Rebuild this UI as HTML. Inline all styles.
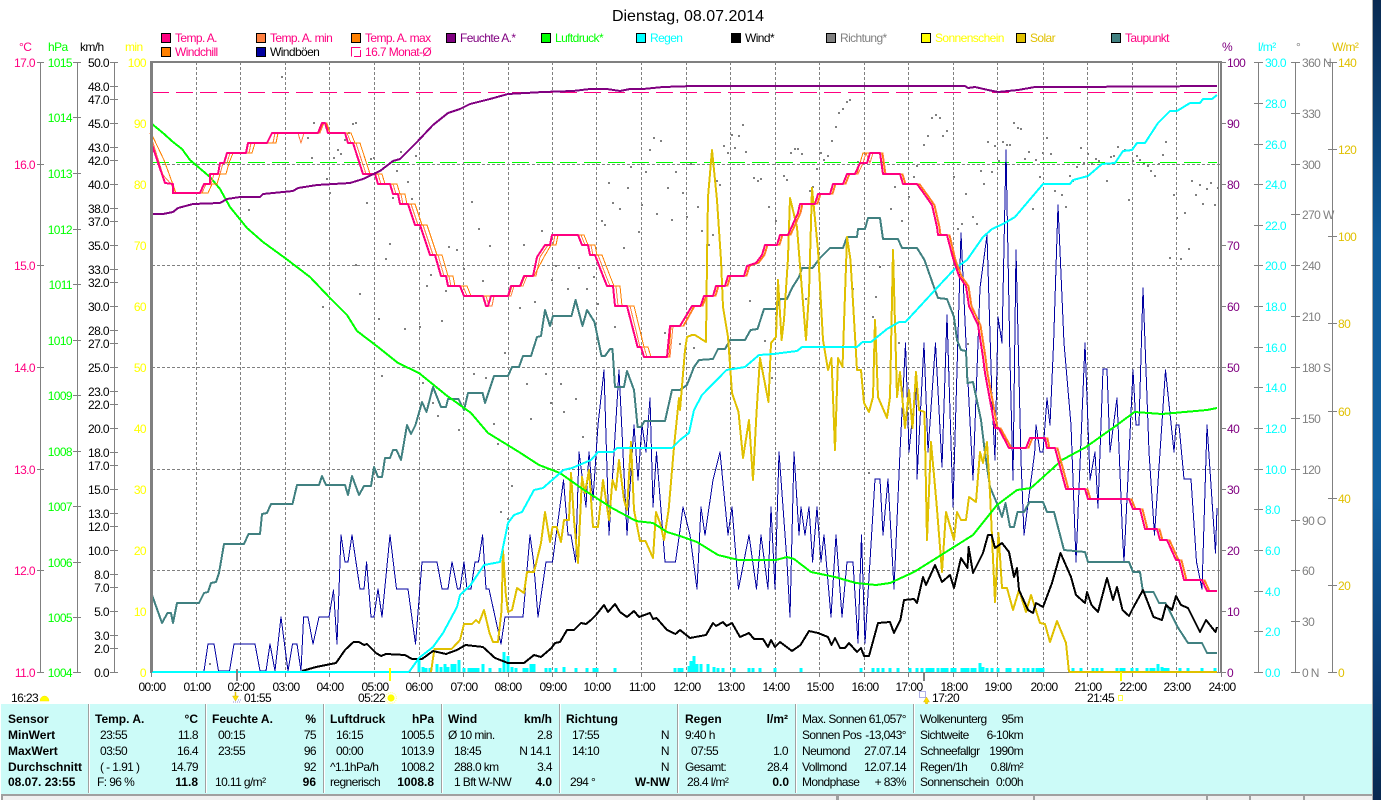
<!DOCTYPE html>
<html><head><meta charset="utf-8"><title>Dienstag, 08.07.2014</title>
<style>
html,body{margin:0;padding:0;background:#fff;width:1381px;height:800px;overflow:hidden}
svg{position:absolute;left:0;top:0;display:block}
text{font-family:"Liberation Sans",sans-serif;font-size:12px;letter-spacing:-.6px;fill:#000}
.e{text-anchor:end}.m{text-anchor:middle}
.b{font-weight:bold;letter-spacing:0}
.p{fill:#ff0080}.g{fill:#00ff00}.y{fill:#ffff00}.v{fill:#800080}.c{fill:#00ffff}.s{fill:#808080}.o{fill:#e0c000}
.l{fill:none;stroke-linejoin:round;shape-rendering:crispEdges}
</style></head><body>
<svg width="1381" height="800" viewBox="0 0 1381 800" xmlns="http://www.w3.org/2000/svg">
<defs><linearGradient id="d" x1="0" y1="0" x2="0" y2="1"><stop offset="0" stop-color="#0a2a52"/><stop offset=".3" stop-color="#0f5a98"/><stop offset=".62" stop-color="#1160a0"/><stop offset=".86" stop-color="#0b3a70"/><stop offset="1" stop-color="#08284f"/></linearGradient></defs>
<rect x="1373" y="0" width="8" height="800" fill="url(#d)"/>
<rect x="1372" y="0" width="1" height="800" fill="#a8a8a8"/>

<text x="688" y="21" class="m" style="font-size:16px;letter-spacing:0">Dienstag, 08.07.2014</text>

<!-- legend -->
<g stroke="#000" stroke-width="1" shape-rendering="crispEdges">
<rect x="161.5" y="33.5" width="9" height="9" fill="#ff0080"/><rect x="256.5" y="33.5" width="9" height="9" fill="#ff8040"/><rect x="351.5" y="33.5" width="9" height="9" fill="#ff8000"/><rect x="446.5" y="33.5" width="9" height="9" fill="#800080"/><rect x="541.5" y="33.5" width="9" height="9" fill="#00ff00"/><rect x="636.5" y="33.5" width="9" height="9" fill="#00ffff"/><rect x="731.5" y="33.5" width="9" height="9" fill="#000"/><rect x="826.5" y="33.5" width="9" height="9" fill="#808080"/><rect x="921.5" y="33.5" width="9" height="9" fill="#ffff00"/><rect x="1016.5" y="33.5" width="9" height="9" fill="#e0c000"/><rect x="1111.5" y="33.5" width="9" height="9" fill="#408080"/>
<rect x="161.5" y="47.5" width="9" height="9" fill="#ff8000"/><rect x="256.5" y="47.5" width="9" height="9" fill="#0000a0"/>
</g>
<path d="M360.5 47.5H351.5V56.5M354 56.5H360.5V50" fill="none" stroke="#ff0080" shape-rendering="crispEdges"/>
<g>
<text x="175" y="42" class="p">Temp. A.</text><text x="270" y="42" class="p">Temp. A. min</text><text x="365" y="42" class="p">Temp. A. max</text><text x="460" y="42" class="v">Feuchte A.*</text><text x="555" y="42" class="g">Luftdruck*</text><text x="650" y="42" class="c">Regen</text><text x="745" y="42">Wind*</text><text x="840" y="42" class="s">Richtung*</text><text x="935" y="42" class="y">Sonnenschein</text><text x="1030" y="42" class="o">Solar</text><text x="1125" y="42" class="p">Taupunkt</text>
<text x="175" y="56" class="p">Windchill</text><text x="270" y="56">Windböen</text><text x="365" y="56" class="p">16.7 Monat-Ø</text>
</g>

<!-- axis headers -->
<text x="19" y="51" class="p">°C</text><text x="48" y="51" class="g">hPa</text><text x="80" y="51">km/h</text><text x="125" y="51" class="y">min</text>
<text x="1222" y="51" class="v">%</text><text x="1258" y="51" class="c">l/m²</text><text x="1296" y="51" class="s">°</text><text x="1332" y="51" class="o">W/m²</text>

<!-- axis lines and ticks -->
<g stroke="#808080" stroke-width="1" shape-rendering="crispEdges" fill="none">
<path d="M40.5 62V672M77.5 62V672M114.5 62V672M1258.5 62V672M1295.5 62V672M1332.5 62V672"/>
<path d="M37 62.5h7M37 164.5h7M37 265.5h7M37 367.5h7M37 469.5h7M37 570.5h7M37 672.5h7"/>
<path d="M73 62.5h8M73 117.5h8M73 173.5h8M73 229.5h8M73 284.5h8M73 340.5h8M73 395.5h8M73 451.5h8M73 506.5h8M73 562.5h8M73 617.5h8M73 672.5h8"/>
<path d="M110 62.5h8M110 86.5h8M110 99.5h8M110 123.5h8M110 147.5h8M110 160.5h8M110 184.5h8M110 208.5h8M110 221.5h8M110 245.5h8M110 269.5h8M110 282.5h8M110 306.5h8M110 330.5h8M110 343.5h8M110 367.5h8M110 391.5h8M110 404.5h8M110 428.5h8M110 452.5h8M110 465.5h8M110 489.5h8M110 513.5h8M110 526.5h8M110 550.5h8M110 574.5h8M110 587.5h8M110 611.5h8M110 635.5h8M110 648.5h8M110 672.5h8"/>
<path d="M1222 62.5h4M1222 123.5h4M1222 184.5h4M1222 245.5h4M1222 306.5h4M1222 367.5h4M1222 428.5h4M1222 489.5h4M1222 550.5h4M1222 611.5h4M1222 672.5h4"/>
<path d="M1254 62.5h9M1254 103.5h9M1254 144.5h9M1254 184.5h9M1254 225.5h9M1254 265.5h9M1254 306.5h9M1254 347.5h9M1254 387.5h9M1254 428.5h9M1254 469.5h9M1254 509.5h9M1254 550.5h9M1254 591.5h9M1254 631.5h9M1254 672.5h9"/>
<path d="M1291 62.5h9M1291 113.5h9M1291 164.5h9M1291 214.5h9M1291 265.5h9M1291 316.5h9M1291 367.5h9M1291 418.5h9M1291 469.5h9M1291 520.5h9M1291 570.5h9M1291 621.5h9M1291 672.5h9"/>
<path d="M1328 62.5h9M1328 149.5h9M1328 236.5h9M1328 323.5h9M1328 411.5h9M1328 498.5h9M1328 585.5h9M1328 672.5h9"/>
</g>

<!-- axis labels -->
<g dominant-baseline="central" transform="translate(0,1)">
<g text-anchor="end"><text x="35" y="62" class="p">17.0</text><text x="35" y="164" class="p">16.0</text><text x="35" y="265" class="p">15.0</text><text x="35" y="367" class="p">14.0</text><text x="35" y="469" class="p">13.0</text><text x="35" y="570" class="p">12.0</text><text x="35" y="672" class="p">11.0</text></g>
<g text-anchor="end"><text x="72" y="62" class="g">1015</text><text x="72" y="117" class="g">1014</text><text x="72" y="173" class="g">1013</text><text x="72" y="229" class="g">1012</text><text x="72" y="284" class="g">1011</text><text x="72" y="340" class="g">1010</text><text x="72" y="395" class="g">1009</text><text x="72" y="451" class="g">1008</text><text x="72" y="506" class="g">1007</text><text x="72" y="562" class="g">1006</text><text x="72" y="617" class="g">1005</text><text x="72" y="672" class="g">1004</text></g>
<g text-anchor="end"><text x="109" y="62">50.0</text><text x="109" y="86">48.0</text><text x="109" y="99">47.0</text><text x="109" y="123">45.0</text><text x="109" y="147">43.0</text><text x="109" y="160">42.0</text><text x="109" y="184">40.0</text><text x="109" y="208">38.0</text><text x="109" y="221">37.0</text><text x="109" y="245">35.0</text><text x="109" y="269">33.0</text><text x="109" y="282">32.0</text><text x="109" y="306">30.0</text><text x="109" y="330">28.0</text><text x="109" y="343">27.0</text><text x="109" y="367">25.0</text><text x="109" y="391">23.0</text><text x="109" y="404">22.0</text><text x="109" y="428">20.0</text><text x="109" y="452">18.0</text><text x="109" y="465">17.0</text><text x="109" y="489">15.0</text><text x="109" y="513">13.0</text><text x="109" y="526">12.0</text><text x="109" y="550">10.0</text><text x="109" y="574">8.0</text><text x="109" y="587">7.0</text><text x="109" y="611">5.0</text><text x="109" y="635">3.0</text><text x="109" y="648">2.0</text><text x="109" y="672">0.0</text></g>
<g text-anchor="end"><text x="146" y="62" class="y">100</text><text x="146" y="123" class="y">90</text><text x="146" y="184" class="y">80</text><text x="146" y="245" class="y">70</text><text x="146" y="306" class="y">60</text><text x="146" y="367" class="y">50</text><text x="146" y="428" class="y">40</text><text x="146" y="489" class="y">30</text><text x="146" y="550" class="y">20</text><text x="146" y="611" class="y">10</text><text x="146" y="672" class="y">0</text></g>
<g><text x="1227" y="62" class="v">100</text><text x="1227" y="123" class="v">90</text><text x="1227" y="184" class="v">80</text><text x="1227" y="245" class="v">70</text><text x="1227" y="306" class="v">60</text><text x="1227" y="367" class="v">50</text><text x="1227" y="428" class="v">40</text><text x="1227" y="489" class="v">30</text><text x="1227" y="550" class="v">20</text><text x="1227" y="611" class="v">10</text><text x="1227" y="672" class="v">0</text></g>
<g><text x="1265" y="62" class="c">30.0</text><text x="1265" y="103" class="c">28.0</text><text x="1265" y="144" class="c">26.0</text><text x="1265" y="184" class="c">24.0</text><text x="1265" y="225" class="c">22.0</text><text x="1265" y="265" class="c">20.0</text><text x="1265" y="306" class="c">18.0</text><text x="1265" y="347" class="c">16.0</text><text x="1265" y="387" class="c">14.0</text><text x="1265" y="428" class="c">12.0</text><text x="1265" y="469" class="c">10.0</text><text x="1265" y="509" class="c">8.0</text><text x="1265" y="550" class="c">6.0</text><text x="1265" y="591" class="c">4.0</text><text x="1265" y="631" class="c">2.0</text><text x="1265" y="672" class="c">0.0</text></g>
<g><text x="1302" y="62" class="s">360 N</text><text x="1302" y="113" class="s">330</text><text x="1302" y="164" class="s">300</text><text x="1302" y="214" class="s">270 W</text><text x="1302" y="265" class="s">240</text><text x="1302" y="316" class="s">210</text><text x="1302" y="367" class="s">180 S</text><text x="1302" y="418" class="s">150</text><text x="1302" y="469" class="s">120</text><text x="1302" y="520" class="s">90 O</text><text x="1302" y="570" class="s">60</text><text x="1302" y="621" class="s">30</text><text x="1302" y="672" class="s">0 N</text></g>
<g><text x="1338" y="62" class="o">140</text><text x="1338" y="149" class="o">120</text><text x="1338" y="236" class="o">100</text><text x="1338" y="323" class="o">80</text><text x="1338" y="411" class="o">60</text><text x="1338" y="498" class="o">40</text><text x="1338" y="585" class="o">20</text><text x="1338" y="672" class="o">0</text></g>
</g>

<!-- grid -->
<g stroke="#808080" stroke-width="1" stroke-dasharray="3 2" shape-rendering="crispEdges" fill="none">
<path d="M196.5 62V672M240.5 62V672M285.5 62V672M329.5 62V672M374.5 62V672M419.5 62V672M463.5 62V672M508.5 62V672M552.5 62V672M596.5 62V672M641.5 62V672M686.5 62V672M730.5 62V672M775.5 62V672M819.5 62V672M864.5 62V672M908.5 62V672M953.5 62V672M997.5 62V672M1043.5 62V672M1087.5 62V672M1132.5 62V672M1176.5 62V672"/>
<path d="M152 164.5H1222M152 265.5H1222M152 367.5H1222M152 469.5H1222M152 570.5H1222"/>
</g>
<g stroke="#808080" stroke-width="1" shape-rendering="crispEdges" fill="none">
<path d="M151.5 672V677M196.5 672V677M240.5 672V677M285.5 672V677M329.5 672V677M374.5 672V677M419.5 672V677M463.5 672V677M508.5 672V677M552.5 672V677M596.5 672V677M641.5 672V677M686.5 672V677M730.5 672V677M775.5 672V677M819.5 672V677M864.5 672V677M908.5 672V677M953.5 672V677M997.5 672V677M1043.5 672V677M1087.5 672V677M1132.5 672V677M1176.5 672V677M1221.5 672V677"/>
</g>

<!-- direction dots -->
<path fill="#808080" shape-rendering="crispEdges" d="M281 76h2v2h-2zM313 122h2v2h-2zM352 123h2v2h-2zM355 122h2v2h-2zM348 132h2v2h-2zM307 137h2v2h-2zM344 139h2v2h-2zM337 149h2v2h-2zM340 153h2v2h-2zM311 157h2v2h-2zM333 157h2v2h-2zM370 158h2v2h-2zM373 157h2v2h-2zM400 151h2v2h-2zM415 155h2v2h-2zM396 170h2v2h-2zM407 181h2v2h-2zM326 178h2v2h-2zM329 192h2v2h-2zM366 202h2v2h-2zM392 197h2v2h-2zM411 198h2v2h-2zM248 209h2v2h-2zM389 243h2v2h-2zM385 258h2v2h-2zM448 246h2v2h-2zM456 249h2v2h-2zM471 201h2v2h-2zM478 228h2v2h-2zM489 245h2v2h-2zM523 244h2v2h-2zM541 230h2v2h-2zM601 220h2v2h-2zM604 224h2v2h-2zM608 182h2v2h-2zM612 202h2v2h-2zM619 208h2v2h-2zM627 187h2v2h-2zM623 247h2v2h-2zM630 166h2v2h-2zM638 231h2v2h-2zM641 204h2v2h-2zM645 171h2v2h-2zM649 149h2v2h-2zM653 137h2v2h-2zM660 140h2v2h-2zM656 213h2v2h-2zM667 187h2v2h-2zM671 219h2v2h-2zM675 171h2v2h-2zM682 192h2v2h-2zM686 216h2v2h-2zM690 163h2v2h-2zM697 206h2v2h-2zM701 230h2v2h-2zM708 244h2v2h-2zM712 234h2v2h-2zM716 180h2v2h-2zM719 184h2v2h-2zM723 145h2v2h-2zM727 152h2v2h-2zM731 134h2v2h-2zM734 147h2v2h-2zM738 135h2v2h-2zM742 124h2v2h-2zM745 151h2v2h-2zM753 177h2v2h-2zM757 180h2v2h-2zM760 178h2v2h-2zM768 206h2v2h-2zM775 220h2v2h-2zM783 175h2v2h-2zM786 179h2v2h-2zM790 152h2v2h-2zM794 148h2v2h-2zM797 148h2v2h-2zM801 153h2v2h-2zM809 190h2v2h-2zM812 186h2v2h-2zM816 168h2v2h-2zM820 152h2v2h-2zM823 159h2v2h-2zM827 155h2v2h-2zM831 140h2v2h-2zM835 126h2v2h-2zM838 112h2v2h-2zM842 108h2v2h-2zM846 101h2v2h-2zM849 99h2v2h-2zM857 161h2v2h-2zM890 208h2v2h-2zM894 186h2v2h-2zM901 220h2v2h-2zM908 196h2v2h-2zM913 176h2v2h-2zM916 165h2v2h-2zM931 117h2v2h-2zM935 114h2v2h-2zM939 117h2v2h-2zM946 130h2v2h-2zM942 135h2v2h-2zM927 135h2v2h-2zM923 144h2v2h-2zM953 176h2v2h-2zM980 170h2v2h-2zM991 171h2v2h-2zM983 183h2v2h-2zM965 193h2v2h-2zM961 223h2v2h-2zM972 216h2v2h-2zM976 223h2v2h-2zM957 228h2v2h-2zM987 141h2v2h-2zM994 145h2v2h-2zM1002 141h2v2h-2zM1006 144h2v2h-2zM1009 144h2v2h-2zM1013 122h2v2h-2zM1017 127h2v2h-2zM1020 128h2v2h-2zM998 160h2v2h-2zM1028 151h2v2h-2zM1024 158h2v2h-2zM1035 159h2v2h-2zM1042 152h2v2h-2zM1046 137h2v2h-2zM1050 153h2v2h-2zM1039 176h2v2h-2zM1054 190h2v2h-2zM1061 194h2v2h-2zM1065 206h2v2h-2zM1032 208h2v2h-2zM1069 175h2v2h-2zM1072 180h2v2h-2zM1076 166h2v2h-2zM1080 147h2v2h-2zM1087 153h2v2h-2zM1083 162h2v2h-2zM1091 163h2v2h-2zM1095 158h2v2h-2zM1098 160h2v2h-2zM1106 180h2v2h-2zM1110 156h2v2h-2zM1113 155h2v2h-2zM1117 146h2v2h-2zM1124 149h2v2h-2zM1128 199h2v2h-2zM1132 160h2v2h-2zM1136 155h2v2h-2zM1139 159h2v2h-2zM1143 163h2v2h-2zM1147 165h2v2h-2zM1150 170h2v2h-2zM1154 175h2v2h-2zM1158 163h2v2h-2zM1162 154h2v2h-2zM1165 141h2v2h-2zM1173 194h2v2h-2zM1176 217h2v2h-2zM1180 258h2v2h-2zM1184 212h2v2h-2zM1188 248h2v2h-2zM1191 180h2v2h-2zM1195 194h2v2h-2zM1199 184h2v2h-2zM1202 203h2v2h-2zM1206 188h2v2h-2zM1210 182h2v2h-2zM1214 204h2v2h-2zM1217 187h2v2h-2zM1169 257h2v2h-2zM359 293h2v2h-2zM322 306h2v2h-2zM378 318h2v2h-2zM404 328h2v2h-2zM419 326h2v2h-2zM441 320h2v2h-2zM430 274h2v2h-2zM426 285h2v2h-2zM445 290h2v2h-2zM463 268h2v2h-2zM482 280h2v2h-2zM504 352h2v2h-2zM519 307h2v2h-2zM534 301h2v2h-2zM551 279h2v2h-2zM555 265h2v2h-2zM567 288h2v2h-2zM578 267h2v2h-2zM586 288h2v2h-2zM593 276h2v2h-2zM597 303h2v2h-2zM614 326h2v2h-2zM664 332h2v2h-2zM679 343h2v2h-2zM545 373h2v2h-2zM560 383h2v2h-2zM526 383h2v2h-2zM485 377h2v2h-2zM473 373h2v2h-2zM422 382h2v2h-2zM381 375h2v2h-2zM437 415h2v2h-2zM432 402h2v2h-2zM453 399h2v2h-2zM458 429h2v2h-2zM493 423h2v2h-2zM497 443h2v2h-2zM530 418h2v2h-2zM550 402h2v2h-2zM563 411h2v2h-2zM575 398h2v2h-2zM582 436h2v2h-2zM511 485h2v2h-2zM500 511h2v2h-2zM507 518h2v2h-2zM209 663h2v2h-2zM355 264h2v2h-2zM749 300h2v2h-2zM693 347h2v2h-2zM805 298h2v2h-2zM764 340h2v2h-2zM771 377h2v2h-2zM852 288h2v2h-2zM875 296h2v2h-2zM879 266h2v2h-2zM872 316h2v2h-2zM898 342h2v2h-2zM868 472h2v2h-2zM967 343h2v2h-2z"/>

<!-- monthly average dashed lines -->
<path d="M152 92.5H1217" stroke="#ff0080" stroke-width="1" stroke-dasharray="17 7" shape-rendering="crispEdges"/>
<path d="M152 162.5H1217" stroke="#00ff00" stroke-width="1" stroke-dasharray="17 7" shape-rendering="crispEdges"/>

<!-- rain bars -->
<path fill="none" stroke="#00ffff" stroke-width="3" shape-rendering="crispEdges" d="M419 672v-14M423 672v-5M426 672v-4M430 672v-4M437 672v-8M441 672v-5M445 672v-8M448 672v-5M452 672v-8M455 672v-8M459 672v-12M464 672v-4M469 672v-4M472 672v-4M475 672v-4M478 672v-4M483 672v-8M490 672v-4M500 672v-4M504 672v-20M508 672v-16M512 672v-5M516 672v-4M524 672v-4M527 672v-4M531 672v-8M534 672v-8M546 672v-4M550 672v-4M556 672v-4M564 672v-5M576 672v-4M587 672v-4M594 672v-4M597 672v-4M615 672v-4M675 672v-4M679 672v-4M682 672v-4M689 672v-6M691 672v-11M694 672v-16M697 672v-8M701 672v-8M708 672v-8M714 672v-5M718 672v-4M723 672v-4M734 672v-4M749 672v-4M753 672v-4M760 672v-4M775 672v-4M801 672v-4M861 672v-4M873 672v-4M878 672v-4M883 672v-4M890 672v-4M898 672v-4M910 672v-4M917 672v-4M922 672v-4M927 672v-4M930 672v-4M933 672v-4M938 672v-4M942 672v-4M944 672v-4M947 672v-4M952 672v-4M955 672v-4M962 672v-4M965 672v-4M968 672v-4M972 672v-4M975 672v-4M980 672v-9M983 672v-5M987 672v-4M992 672v-4M998 672v-4M1007 672v-4M1010 672v-4M1018 672v-4M1024 672v-4M1028 672v-4M1033 672v-4M1037 672v-4M1040 672v-4M1043 672v-4M1073 672v-4M1081 672v-4M1093 672v-4M1097 672v-4M1102 672v-4M1117 672v-4M1121 672v-4M1124 672v-4M1132 672v-4M1137 672v-4M1147 672v-4M1151 672v-4M1154 672v-4M1158 672v-8M1162 672v-5M1165 672v-4M1168 672v-4M1180 672v-4M1188 672v-4M1202 672v-4M1215 672v-4"/>

<!-- wind gusts -->
<polyline class="l" stroke="#0000a0" stroke-width="1" points="204,671 208,644 214,644 218.5,671 229.5,671 234,644 255,644 260,671 266,671 270,644 275,671 281,617 288,671 292.5,644 297,644 301,671 303.6,617 308,617 313,644 319,617 329,617 333.5,590 337,644 341,535 345,562 348,562 352,535 360,589 364,589 366.6,562 371,617 374,617 378,589 382,617 390,535 396.5,589 408,589 415.5,644 422,562 437,562 442,589 448,589 452,562 457.5,589 460,589 464,562 467,589 471,589 475,562 478.5,562 482.6,535 486,589 489,589 501,644 505,617 523,617 530,535 533.6,562 538,617 546,562 552.5,562 563.5,480 568,535 571,535 575.6,562 579,452 586,507 589,452 593,500 598,425 604,370 609,535 619,370 627,535 634,425 638,480 642,425 646,452 650,398 653,507 656.5,452 665,562 675.5,562 680,530 683,507 690,535 697,589 701,507 705,535 713,480 720,452 728,535 732,507 738.5,589 749,535 756.5,589 761,535 768,589 771,507 775,589 779,452 787,562 790,617 794,452 799,535 801,507 805,535 809,507 812.6,562 817,507 821,562 824,535 831,617 836,535 842,617 847,562 853,562 858,643 861.5,535 865,643 875,479 880,479 883,535 888,479 894,589 900,452 905.5,343 909,452 916,380 917,479 924,343 928,452 935.5,343 942,467 947,315 953,507 961,233 966,343 973,480 980,288 987,235 992,400 995,460 998,317 1002,343 1006,150 1010,360 1013,480 1016,250 1021,460 1024,535 1034.7,452 1036,425 1040,452 1043,452 1047,398 1050,425 1053.6,343 1058,205 1064,343 1071,425 1076,562 1085,343 1090,480 1095,452 1098,508 1103,369 1107,369 1110,452 1117,398 1122.5,535 1124,562 1133,370 1136,425 1139,425 1143,288 1149,452 1154.5,535 1165.5,370 1174,452 1176,425 1179,425 1184,479 1191,479 1196.5,562 1202,589 1207,425 1215.5,553 1217,508"/>

<!-- dew point -->
<polyline class="l" stroke="#408080" stroke-width="2" points="152,595 162,623 167.5,613 171,613 173,623 177,603 199,603 204,593 208,592 211,583 216,582 219,573 224,544 244,544 248.5,534 260,534 262,514 267,513 271,504 292.5,504 297,485 319,485 322,476 326,485 345,485 348,495 352,476 359,495 364,486 371,486 374,467 378,477 382,477 385,458 390,458 393,450 396.5,450 401,460 407,425 411,434 415.5,425 422,402 426.5,412 433,387 441,407 446,407 448,399 458.5,399 464,410 468,393 482.6,393 485,403 494,376 508,376 512,367 519,367 523,356 531,356 537,337 541,336 545,310 550,326 553,316 571.5,316 575.6,300 582.5,326 587,310 594.5,322 601.5,356 605,356 610,349 612.5,349 615,387 624,387 627,371 634,390 637.6,427 641,427 644.5,421 665,421 672,390 680,390 687,385 694,367 699,360 713,359 718,349 725,349 730,340 745,340 750.6,330 757.5,329 764,309 776,309 780,299 787,299 792,288 799,277 802,268 812.6,268 820,258 830,248 843,248 847,237 857,237 858,229 865,229 868,218 880,218 883,239 898,239 902,248 917,248 924.5,260 935,290 938,298 947,299 954,317 957,340 961,350 966,351 967.5,383 973,382 981,420 985,453 990,487 998.5,507 1002,517 1005.5,503 1010,527 1014,527 1017.5,512 1024,512 1029.5,502 1043,502 1047,512 1054,512 1064,550 1085,552 1088,562 1129,562 1133,572 1140,572 1143,592 1153.5,592 1159,603 1165.5,603 1177.6,627 1188,643 1202,643 1207,653 1217,653"/>

<!-- solar -->
<polyline class="l" stroke="#e0c000" stroke-width="2" points="431,672 434.4,649 451.6,649 460,640 464,624 472,624 476,620 479,623 484,610 489.5,633 493,642 498,642 501.6,610 503,550 505.7,593 508,612 512,610 517,588 524,593 527,572 534,572 541,543 545,512 550,542 552.5,527 556.6,527 561,542 564,520 569,520 571,473 574,520 578,563 582,477 585,493 589,470 593,527 598,527 603,480 609,520 612.5,480 616,490 619,460 624,500 627,510 631,442 634,510 640,541 645.5,541 653,558 656,512 660,523 664,540 668.6,510 674,447 679,398 680,410 685,350 687,337 692,335 695,335 706,342 707,260 708,197 712,150 717,200 721,260 723,307 728,337 732,393 738.5,412 743,458 749,420 753,480 756.5,413 760,358 768.5,402 771,343 776,337 778,280 781.6,340 784,320 788,258 790,198 797,227 799,253 806,340 809,293 812,188 818,250 823,340 828,370 831.5,358 835,450 838,358 842.5,367 847,237 850.5,260 857,370 861,370 864,403 869,412 873,397 875,320 878,397 887,418 890,397 893,250 897,397 900,372 905,428 909,390 912.5,428 916,372 919,410 924.5,412 927,540 931,442 936.5,503 942,572 946,512 954,540 957,512 961,520 966,520 969,497 976,502 980,452 983,463 987,442 990,493 995,602 998.5,533 1002,588 1007,588 1013,610 1019,590 1026,612 1031,595 1040,623 1045,624 1050,642 1057,621 1066,643 1069,672 1217,672"/>

<!-- wind -->
<polyline class="l" stroke="#000" stroke-width="2" points="302,671 316,667 336,663 345,650 353.5,642 359,642 364,645 367,644 376,653 381,656 386,654 405,655 412,659 422,659 433,651 446,654 457,650 465.5,645 483,647 495,658 508,663 524,663 534,655 541,657 551.5,648 555,643 560,642 567,630 574,630 581,623 586,624 591,620 596,615 604,605 608,612 615,604 620,612 627,617 634,611 639,617 650,613 653,619 656.5,618 667,630 675.5,634 680,630 690,638 706,635 713,623 716,626 723,622 726.5,626 732,623 740,637 749,633 754,639 763,639 768,647 771,640 775,647 780,642 792,651 800.5,645 809,631 818,633 828,637 831.5,645 835,638 840,648 845,648 849,643 857,652 861,648 864,656 869,656 878,623 890,622 894,633 900.4,620 904,600 914,599 917,603 923,577 926,585 935,565 942,582 950,575 954,588 961,558 967.5,568 968.6,547 973,573 983,553 988,535 991.6,535 995,548 1002,543 1009,552 1014,577 1017,568 1019,590 1028,610 1033,613 1036,603 1043,607 1052,583 1060.5,553 1071,577 1076,595 1085,603 1087,592 1091.5,605 1098,612 1107,578 1113,600 1117,587 1122.5,610 1129,616 1133,608 1143,590 1153.5,617 1162,620 1166,605 1172,610 1176,596 1181,605 1188,608 1200,632 1206,620 1215.5,632 1217,627"/>

<!-- pressure -->
<polyline class="l" stroke="#00ff00" stroke-width="2" points="152,124 163,133 173,142 182,149 190,160 210,177 220,189 230,207 247,228 263,242 285,258 310,277 329,297 347,315 357,331 378,347 398,363 419,373 446,395 471,413 488,433 519,452 539,465 560,473 584,490 612,508 636,521 653,523 667,532 680,536 697,542 718,555 738.5,560 776,560 787,557 794,559 811,572 835,577 856,583 876,585 890,583 914,572 938,557 973,535 997,505 1017,490 1031,488 1062,460 1086,447 1117,425 1134.5,412 1162,414 1207,410 1217,408"/>

<!-- rain total -->
<polyline class="l" stroke="#00ffff" stroke-width="2" points="152,672 409,672 419,658 433,647 443,633 457,607 460,595 470.6,585 484,565 500,562 508,523 514,515 522,512 534,490 543,488 563.5,470 572,468 591,460 598,452 613,452 617,448 672,448 680,440 689,433 694,410 702,395 726.5,370 745,367 759,355 773,354 797,351 802,347 857,347 862.5,342 871,342 887,329 899,322 905.5,322 935,290 955.5,268 967,260 983,237 992,229 1003,224 1015,217 1043,184 1070,184 1073,180 1088,176 1102,164 1115,163 1123,151 1132,150 1137,143 1145,143 1158,123 1170,111 1177,111 1190,103 1200,103 1203,99 1212,99 1217,95"/>

<!-- temperature thin lines -->
<polyline class="l" stroke="#ff8040" stroke-width="1" transform="translate(-2,0)" points="152,133 165,175 173,184 178,193 204,193 208,184 213,184 216,174 222,174 225,163 229,163 232,153 251,153 253,143 275,143 277,133 300,133 303,143 306,133 322,133 326,123 329,123 332,133 349,133 353,143 358,143 368,174 380,174 383,184 395,184 398,194 403,194 405,204 413,204 420,225 425,225 435,255 440,255 446,276 451,276 453,286 465,286 469,296 488,296 491,306 494,306 496,296 513,296 516,286 525,286 529,276 538,276 542,257 550,245 555,245 557,235 583,235 587,245 593,245 595,255 600,255 608,276 612,286 618,286 620,306 632,306 642,347 646,347 649,357 672,357 675,326 686,326 697,306 705,306 709,296 718,296 721,286 730,286 733,276 749,276 752,266 761,263 767,255 770,245 782,245 785,235 793,235 803,213 805,204 820,204 823,194 835,194 838,184 848,184 852,174 860,174 865,163 868,153 872,163 875,153 885,153 888,174 905,174 908,184 922,184 930,195 937,205 942,227 943,235 952,235 958,260 964,276 971,286 974,306 983,325 988,357 990,373 995,400 1000,428 1003,428 1014,448 1031,448 1035,438 1050,438 1052,448 1060,448 1071,489 1090,489 1093,499 1134,499 1138,509 1145,509 1150,529 1162,529 1165,540 1172,540 1181,560 1184,560 1189,580 1207,580 1212,591 1217,591"/>
<polyline class="l" stroke="#ff8000" stroke-width="1" transform="translate(-1,0)" points="152,133 165,160 177,193 209,193 213,184 218,184 221,174 227,174 230,163 234,153 253,153 256,143 277,143 279,133 320,133 324,123 327,123 331,133 352,133 356,143 361,143 371,174 383,174 386,184 398,184 401,194 406,194 408,204 416,204 423,225 428,225 438,255 443,255 449,276 454,276 456,286 468,286 472,296 510,296 513,286 522,286 526,276 535,276 545,257 552,245 557,245 559,235 585,235 589,245 596,245 598,255 603,255 611,276 615,286 621,286 623,306 635,306 645,347 649,347 652,357 670,357 672,326 684,326 695,306 703,306 707,296 716,296 719,286 728,286 731,276 747,276 750,266 759,263 765,255 768,245 780,245 783,235 791,235 801,213 803,204 818,204 821,194 833,194 836,184 846,184 850,174 858,174 861,163 864,153 883,153 886,174 903,174 906,184 920,184 928,195 935,205 940,227 941,235 950,235 956,260 962,276 969,286 972,306 981,325 986,357 988,373 993,400 998,428 1001,428 1012,448 1029,448 1033,438 1048,438 1050,448 1058,448 1069,489 1088,489 1091,499 1132,499 1136,509 1143,509 1148,529 1160,529 1163,540 1170,540 1179,560 1182,560 1187,580 1205,580 1210,591 1217,591"/>
<!-- temperature -->
<polyline class="l" stroke="#ff0080" stroke-width="2" points="152,145 165,183 173,184 173,193 200,193 204,184 210,184 210,174 218,174 220,163 224,163 227,153 246,153 248,143 267,143 272,133 318,133 322,123 325,123 328,133 345,133 348,143 353,143 363,174 375,174 378,184 390,184 393,194 398,194 400,204 408,204 415,225 420,225 430,255 435,255 441,276 446,276 448,286 460,286 464,296 483,296 486,306 488,306 491,296 508,296 511,286 520,286 524,276 533,276 537,257 545,245 550,245 552,235 578,235 582,245 588,245 590,255 595,255 603,276 607,286 613,286 615,306 627,306 637.6,347 641,347 644,357 667,357 670,326 680,326 692,306 700.6,306 704,296 713,296 716,286 725,286 728,276 744,276 747,266 756,263 762,255 765,245 777,245 780,235 788,235 798,213 800,204 815,204 818,194 830,194 833,184 843,184 847,174 855,174 860,163 867,163 870,153 880,153 883,174 900,174 903,184 917,184 925,195 932,205 937,227 938,235 947,235 953,258 959,276 966,286 969,306 978,325 983,357 985,373 990,400 995,428 998.5,428 1009,448 1026,448 1030,438 1045,438 1047,448 1055,448 1066,489 1085,489 1088,499 1129,499 1133,509 1140,509 1145,529 1157,529 1160,540 1167,540 1176,560 1179,560 1184,580 1202,580 1207,591 1217,591"/>

<!-- humidity -->
<polyline class="l" stroke="#800080" stroke-width="2" points="152,214 163,214 173,212 178,208 193,204 220,203 227,199 240,197 260,197 263,194 293,191 298,188 317,185 350,183 363,179 380,171 393,161 400,159 417,142 433,125 448,113 460,109 470,104 490,99 508,94 543,92 573,91 590,89 607,89 620,91 630,89 643,89 663,87 693,86 965,86 968,88 975,87 988,90 998,92 1018,90 1035,87 1070,87 1217,86"/>

<!-- chart frame -->
<g fill="#808080" shape-rendering="crispEdges">
<rect x="150" y="61" width="3" height="612"/>
<rect x="150" y="61" width="1072" height="2"/>
<rect x="1218" y="62" width="1" height="611"/>
<rect x="1220" y="62" width="2" height="611"/>
<rect x="152" y="672" width="1070" height="1"/>
</g>
<path d="M152 672.5H409" stroke="#00ffff" stroke-width="1" shape-rendering="crispEdges"/>
<path d="M1069 672.5H1217" stroke="#e0c000" stroke-width="1" shape-rendering="crispEdges"/>

<!-- sun markers -->
<g shape-rendering="crispEdges">
<rect x="236" y="669" width="2" height="12" fill="#808080"/>
<rect x="389" y="668" width="2" height="13" fill="#ffff00"/>
<rect x="923" y="672" width="2" height="9" fill="#808080"/>
<rect x="1120" y="672" width="2" height="9" fill="#ffff00"/>
</g>

<!-- time labels -->
<g text-anchor="middle">
<text x="152" y="691">00:00</text><text x="197" y="691">01:00</text><text x="241" y="691">02:00</text><text x="286" y="691">03:00</text><text x="330" y="691">04:00</text><text x="375" y="691">05:00</text><text x="419" y="691">06:00</text><text x="464" y="691">07:00</text><text x="508" y="691">08:00</text><text x="553" y="691">09:00</text><text x="597" y="691">10:00</text><text x="642" y="691">11:00</text><text x="687" y="691">12:00</text><text x="731" y="691">13:00</text><text x="776" y="691">14:00</text><text x="820" y="691">15:00</text><text x="865" y="691">16:00</text><text x="909" y="691">17:00</text><text x="954" y="691">18:00</text><text x="998" y="691">19:00</text><text x="1044" y="691">20:00</text><text x="1088" y="691">21:00</text><text x="1133" y="691">22:00</text><text x="1177" y="691">23:00</text><text x="1222" y="691">24:00</text>
</g>

<!-- sun/moon rise -->
<text x="11" y="702">16:23</text>
<path d="M40 701a4.5 5 0 0 1 9 0z" fill="#ffff00" stroke="#ffe000" stroke-width=".5"/>
<path d="M236 692v4h2.5l-3 5-3-5h2.5v-4z" fill="#ffe000" stroke="#c0a000" stroke-width=".4"/>
<path d="M238 700h4M233 702h8" stroke="#9090d0" stroke-width="1" stroke-dasharray="1 1" fill="none"/>
<text x="244" y="702">01:55</text>
<text x="358" y="702">05:22</text>
<circle cx="391" cy="698" r="3.6" fill="#ffff00"/><circle cx="391" cy="698" r="5.4" fill="none" stroke="#ffff80" stroke-width="1" stroke-dasharray="1 1"/>
<rect x="919.5" y="691.5" width="6" height="6" fill="none" stroke="#6060d0" stroke-dasharray="1 1" shape-rendering="crispEdges"/>
<path d="M926.5 697l3 5h-2v2h-2v-2h-2z" fill="#ffe000" stroke="#c0a000" stroke-width=".4"/>
<text x="932" y="702">17:20</text>
<text x="1087" y="702">21:45</text>
<rect x="1118.5" y="695.5" width="4" height="5" fill="none" stroke="#ffff40" stroke-width="1" shape-rendering="crispEdges"/>

<!-- bottom panel -->
<rect x="1" y="704" width="1371" height="90" fill="#ccfbf8"/>
<g fill="#a0a0a0" shape-rendering="crispEdges">
<rect x="88" y="704" width="1" height="89"/><rect x="205" y="704" width="1" height="89"/><rect x="323" y="704" width="1" height="89"/><rect x="559" y="704" width="1" height="89"/><rect x="441" y="704" width="1" height="89"/><rect x="677" y="704" width="1" height="89"/><rect x="795" y="704" width="1" height="89"/><rect x="913" y="704" width="1" height="89"/>
<rect x="1" y="794" width="1371" height="2"/>
</g>
<g fill="#fff" shape-rendering="crispEdges">
<rect x="89" y="704" width="1" height="89"/><rect x="206" y="704" width="1" height="89"/><rect x="324" y="704" width="1" height="89"/><rect x="442" y="704" width="1" height="89"/><rect x="560" y="704" width="1" height="89"/><rect x="678" y="704" width="1" height="89"/><rect x="796" y="704" width="1" height="89"/><rect x="914" y="704" width="1" height="89"/>
</g>
<!-- status bar -->
<rect x="1" y="796" width="1371" height="4" fill="#f0f0f0"/>
<g fill="#a0a0a0" shape-rendering="crispEdges"><rect x="1" y="796" width="2" height="4"/><rect x="836" y="796" width="3" height="4"/><rect x="1033" y="796" width="2" height="4"/><rect x="1206" y="796" width="2" height="4"/><rect x="1249" y="796" width="2" height="4"/><rect x="1303" y="796" width="2" height="4"/></g>

<!-- panel text -->
<g dominant-baseline="central" transform="translate(0,1)">
<text x="8" y="718" class="b">Sensor</text><text x="8" y="734" class="b">MinWert</text><text x="8" y="750" class="b">MaxWert</text><text x="8" y="766" class="b">Durchschnitt</text><text x="8" y="781" class="b">08.07. 23:55</text>

<text x="95" y="718" class="b">Temp. A.</text><text x="198" y="718" class="b e">°C</text>
<text x="100" y="734">23:55</text><text x="198" y="734" class="e">11.8</text>
<text x="100" y="750">03:50</text><text x="198" y="750" class="e">16.4</text>
<text x="100" y="766">( - 1.91 )</text><text x="198" y="766" class="e">14.79</text>
<text x="97" y="781">F: 96 %</text><text x="198" y="781" class="b e">11.8</text>

<text x="212" y="718" class="b">Feuchte A.</text><text x="316" y="718" class="b e">%</text>
<text x="218" y="734">00:15</text><text x="316" y="734" class="e">75</text>
<text x="218" y="750">23:55</text><text x="316" y="750" class="e">96</text>
<text x="316" y="766" class="e">92</text>
<text x="215" y="781">10.11 g/m²</text><text x="316" y="781" class="b e">96</text>

<text x="330" y="718" class="b">Luftdruck</text><text x="434" y="718" class="b e">hPa</text>
<text x="336" y="734">16:15</text><text x="434" y="734" class="e">1005.5</text>
<text x="336" y="750">00:00</text><text x="434" y="750" class="e">1013.9</text>
<text x="330" y="766">^1.1hPa/h</text><text x="434" y="766" class="e">1008.2</text>
<text x="330" y="781">regnerisch</text><text x="434" y="781" class="b e">1008.8</text>

<text x="448" y="718" class="b">Wind</text><text x="552" y="718" class="b e">km/h</text>
<text x="448" y="734">Ø 10 min.</text><text x="552" y="734" class="e">2.8</text>
<text x="454" y="750">18:45</text><text x="551" y="750" class="e">N 14.1</text>
<text x="454" y="766">288.0 km</text><text x="552" y="766" class="e">3.4</text>
<text x="454" y="781">1 Bft W-NW</text><text x="552" y="781" class="b e">4.0</text>

<text x="566" y="718" class="b">Richtung</text>
<text x="572" y="734">17:55</text><text x="669" y="734" class="e">N</text>
<text x="572" y="750">14:10</text><text x="669" y="750" class="e">N</text>
<text x="669" y="766" class="e">N</text>
<text x="570" y="781">294 °</text><text x="670" y="781" class="b e">W-NW</text>

<text x="685" y="718" class="b">Regen</text><text x="788" y="718" class="b e">l/m²</text>
<text x="685" y="734">9:40 h</text>
<text x="691" y="750">07:55</text><text x="788" y="750" class="e">1.0</text>
<text x="685" y="766">Gesamt:</text><text x="788" y="766" class="e">28.4</text>
<text x="687" y="781">28.4 l/m²</text><text x="789" y="781" class="b e">0.0</text>

<text x="802" y="718">Max. Sonnen</text><text x="906" y="718" class="e">61,057°</text>
<text x="802" y="734">Sonnen Pos</text><text x="906" y="734" class="e">-13,043°</text>
<text x="802" y="750">Neumond</text><text x="906" y="750" class="e">27.07.14</text>
<text x="802" y="766">Vollmond</text><text x="906" y="766" class="e">12.07.14</text>
<text x="802" y="781">Mondphase</text><text x="906" y="781" class="e">+ 83%</text>

<text x="920" y="718">Wolkenunterg</text><text x="1023" y="718" class="e">95m</text>
<text x="920" y="734">Sichtweite</text><text x="1023" y="734" class="e">6-10km</text>
<text x="920" y="750">Schneefallgr</text><text x="1023" y="750" class="e">1990m</text>
<text x="920" y="766">Regen/1h</text><text x="1023" y="766" class="e">0.8l/m²</text>
<text x="920" y="781">Sonnenschein</text><text x="1023" y="781" class="e">0:00h</text>
</g>
</svg>
</body></html>
